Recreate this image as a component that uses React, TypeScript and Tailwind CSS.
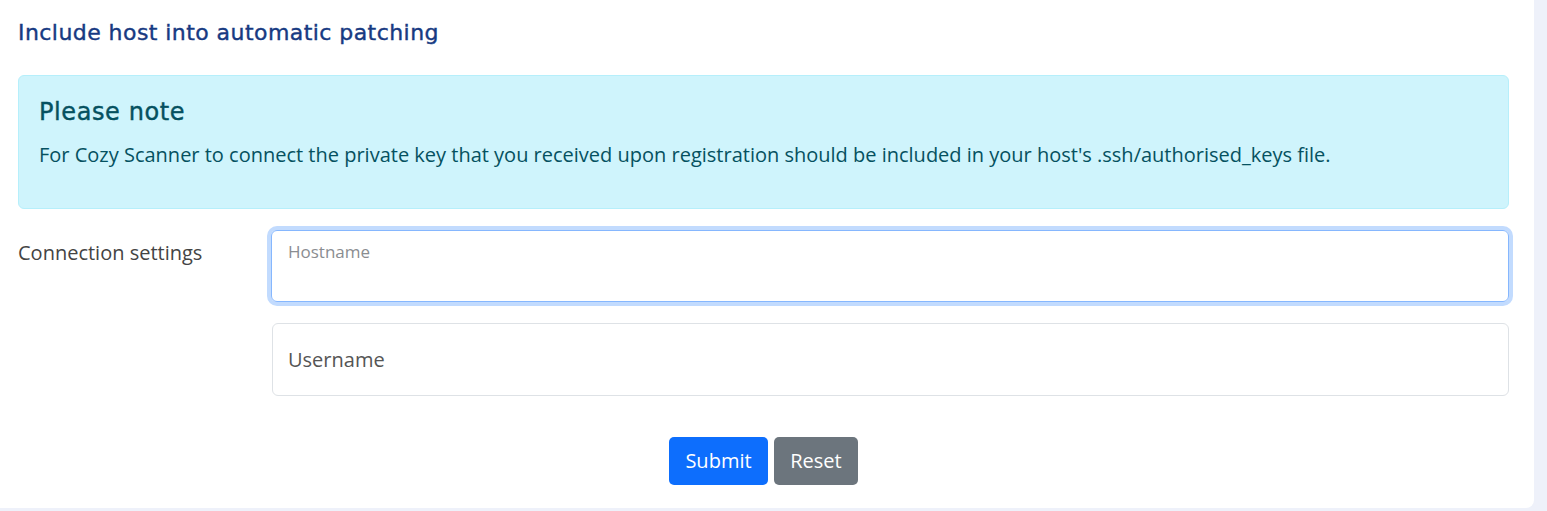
import React from 'react';

export default function App() {
  return (
    <div className="h-[511px] w-full bg-[#eef1fa] pr-[13px] pb-[3px]">
      <section className="h-full rounded-br-lg bg-white pl-[18px] pr-[25px] pt-[19px] font-['Open_Sans',sans-serif]">
        <h2 className="h-[28px] font-['DejaVu_Sans',sans-serif] text-[22px] leading-[28px] tracking-[0.02em] text-[#173a82] [-webkit-text-stroke:0.4px]">
          Include host into automatic patching
        </h2>

        <div className="mt-[28px] h-[134px] rounded-md border border-[#b6effb] bg-[#cff4fc] px-[20px] pt-[20px] text-[#055160]">
          <h3 className="h-[32px] font-['DejaVu_Sans',sans-serif] text-[24px] leading-[32px] tracking-[0.025em] [-webkit-text-stroke:0.4px]">Please note</h3>
          <p className="mt-[12px] text-[20px] leading-[30px]">
            For Cozy Scanner to connect the private key that you received upon registration should be included in your host's .ssh/authorised_keys file.
          </p>
        </div>

        <div className="mt-[21px] flex">
          <label className="w-[253px] pt-[8px] text-[20px] leading-[30px] text-[#444]">Connection settings</label>
          <div className="flex flex-1 flex-col gap-[21px]">
            <div className="h-[72px] rounded-md border border-[#86b7fe] px-[16px] pt-[8px] ring-4 ring-[#c2dbfe]">
              <span className="text-[17px] text-[#8a8d91]">Hostname</span>
            </div>
            <div className="ml-[1px] flex h-[73px] items-center rounded-md border border-[#dee2e6] px-[15px]">
              <span className="text-[20px] text-[#555]">Username</span>
            </div>
          </div>
        </div>

        <div className="mt-[41px] flex justify-center gap-[6px]">
          <button className="h-[48px] w-[99px] rounded-[5px] bg-[#0d6efd] text-[20px] text-white">Submit</button>
          <button className="h-[48px] w-[84px] rounded-[5px] bg-[#6c757d] text-[20px] text-white">Reset</button>
        </div>
      </section>
    </div>
  );
}
